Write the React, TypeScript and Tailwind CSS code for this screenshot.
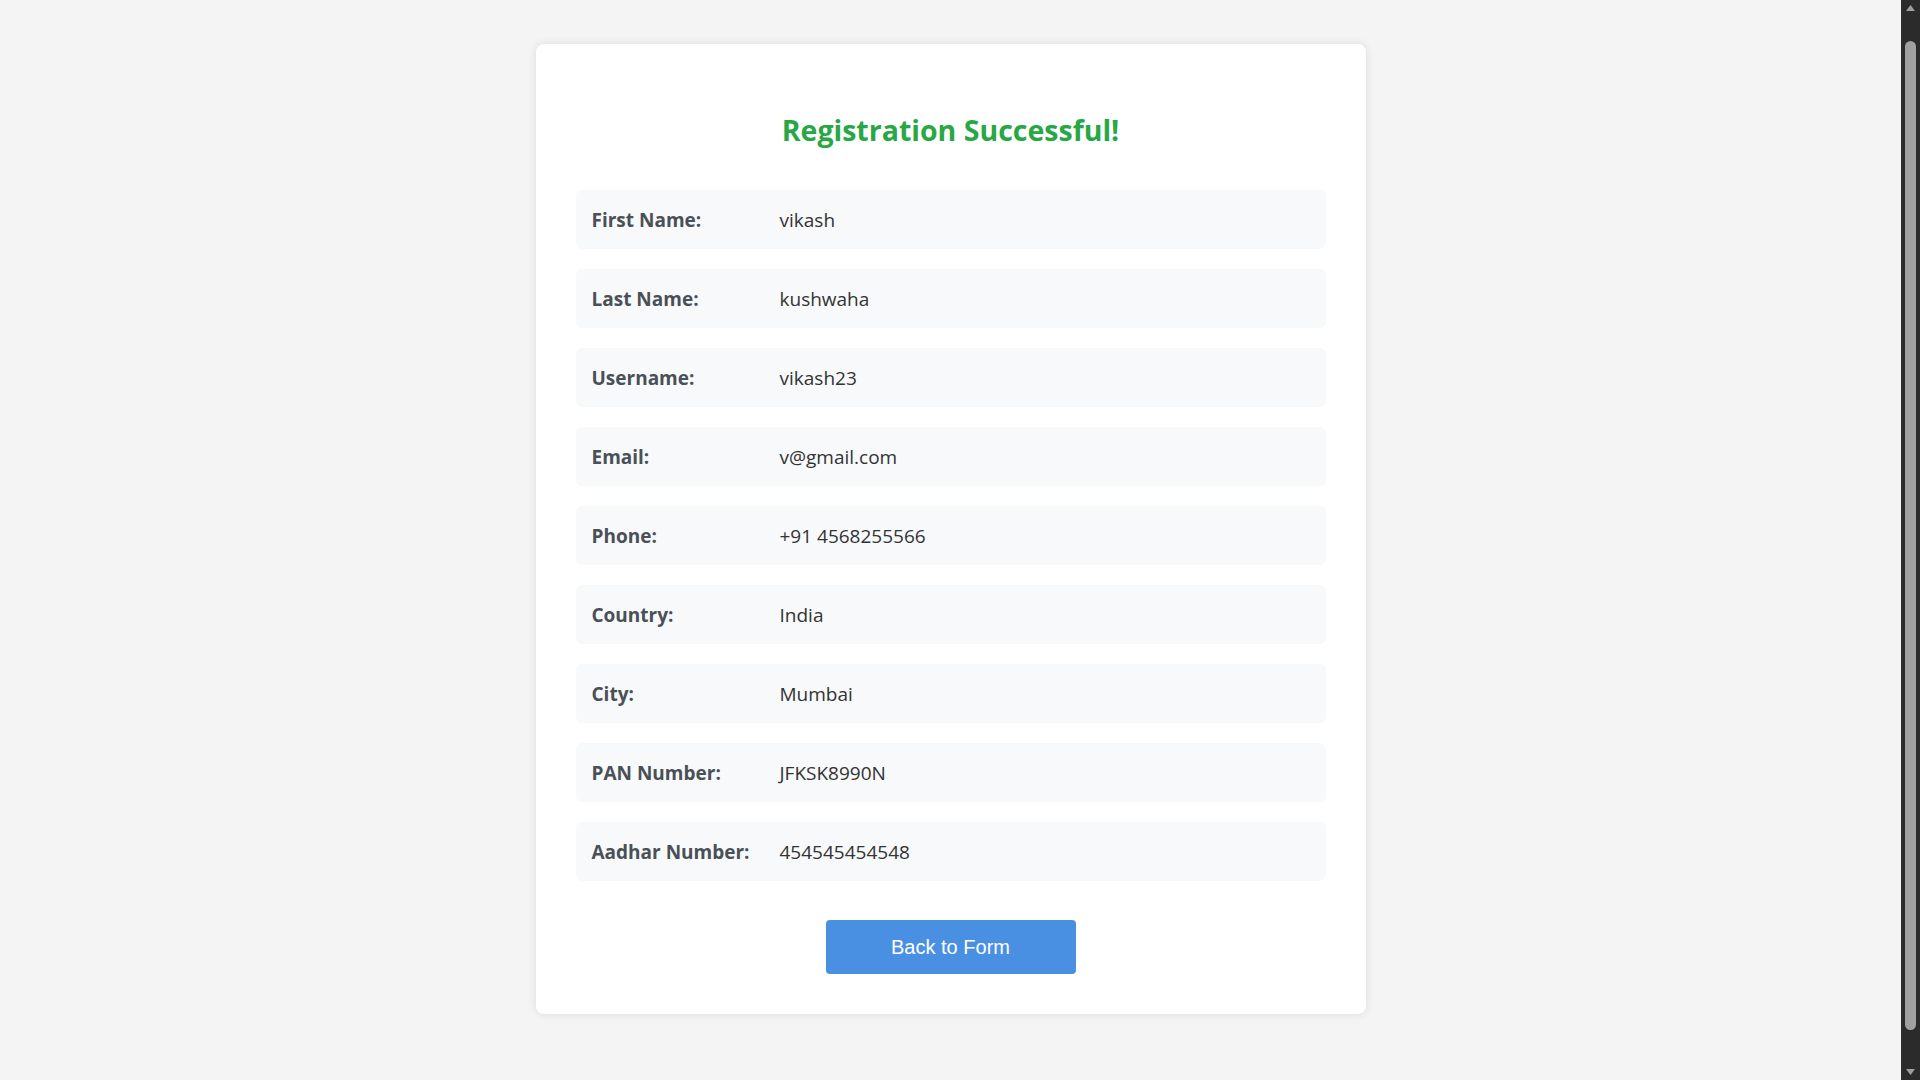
import React from 'react';

const details = [
  { label: 'First Name:', value: 'vikash' },
  { label: 'Last Name:', value: 'kushwaha' },
  { label: 'Username:', value: 'vikash23' },
  { label: 'Email:', value: 'v@gmail.com' },
  { label: 'Phone:', value: '+91 4568255566' },
  { label: 'Country:', value: 'India' },
  { label: 'City:', value: 'Mumbai' },
  { label: 'PAN Number:', value: 'JFKSK8990N' },
  { label: 'Aadhar Number:', value: '454545454548' },
];

const Scrollbar: React.FC = () => (
  <div className="flex h-screen w-[19px] shrink-0 flex-col items-center bg-[#2b2b2b]">
    <svg width="19" height="17" viewBox="0 0 19 17">
      <path d="M5 11 L9.5 5 L14 11 Z" fill="#a0a0a0" />
    </svg>
    <div className="h-[24px]" />
    <div className="h-[989px] w-[11px] rounded-full bg-[#a0a0a0]" />
    <div className="flex-1" />
    <svg width="19" height="17" viewBox="0 0 19 17">
      <path d="M5 6 L14 6 L9.5 12 Z" fill="#a0a0a0" />
    </svg>
  </div>
);

export default function App() {
  return (
    <div className="flex h-screen w-full overflow-hidden bg-[#f4f4f4] font-['Open_Sans',sans-serif]">
      <div className="flex flex-1 justify-center pt-[44px]">
        <div className="h-fit w-[830px] rounded-lg bg-white px-[40px] pt-[69px] pb-[40px] shadow-[0_0_10px_rgba(0,0,0,0.1)]">
          {/* Title */}
          <h2 className="mb-[43px] text-center text-[28.5px] font-bold leading-[34px] text-[#28a745]">
            Registration Successful!
          </h2>

          {/* Submitted details */}
          <div className="flex flex-col gap-[20px]">
            {details.map((item) => (
              <div key={item.label} className="flex h-[59px] items-center rounded-md bg-[#f8f9fa] px-[16px] text-[19px] leading-[26px]">
                <span className="w-[188px] shrink-0 font-bold text-[#495057]">{item.label}</span>
                <span className="text-[#333333]">{item.value}</span>
              </div>
            ))}
          </div>

          <div className="mt-[39px] flex justify-center">
            <button className="h-[54px] w-[250px] rounded-[4px] bg-[#4a90e2] font-['Liberation_Sans',Arial,sans-serif] text-[20px] text-white">
              Back to Form
            </button>
          </div>
        </div>
      </div>
      <Scrollbar />
    </div>
  );
}
